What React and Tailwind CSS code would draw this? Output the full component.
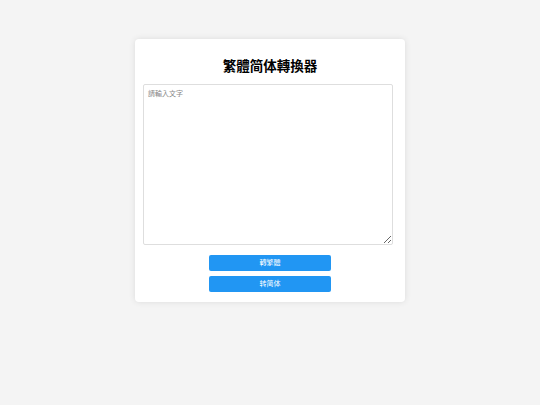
export default function App() {
  return (
    <div className="min-h-screen bg-[#f4f4f4] pt-[39px]" style={{ fontFamily: '"Liberation Sans", "Noto Sans CJK TC", sans-serif' }}>
      <div className="mx-auto w-[270px] rounded-[4px] bg-white px-[8px] pt-[8px] pb-[10px] shadow-[0_0_6px_rgba(0,0,0,0.1)]">
        <h2 className="mt-[12px] mb-[9px] text-center text-[13.5px] font-bold leading-[16px] text-black">
          繁體简体轉換器
        </h2>
        <textarea
          className="block h-[161px] w-[250px] resize-y rounded-[2px] border border-[#dedede] p-[4px] text-[7px] placeholder:text-[#888]"
          placeholder="請輸入文字"
        />
        <div className="mt-[10px] flex flex-col items-center gap-[5px]">
          <button className="h-[16px] w-[122px] rounded-[2px] bg-[#2196f3] text-[7px] text-white">轉繁體</button>
          <button className="h-[16px] w-[122px] rounded-[2px] bg-[#2196f3] text-[7px] text-white">转简体</button>
        </div>
      </div>
    </div>
  );
}
